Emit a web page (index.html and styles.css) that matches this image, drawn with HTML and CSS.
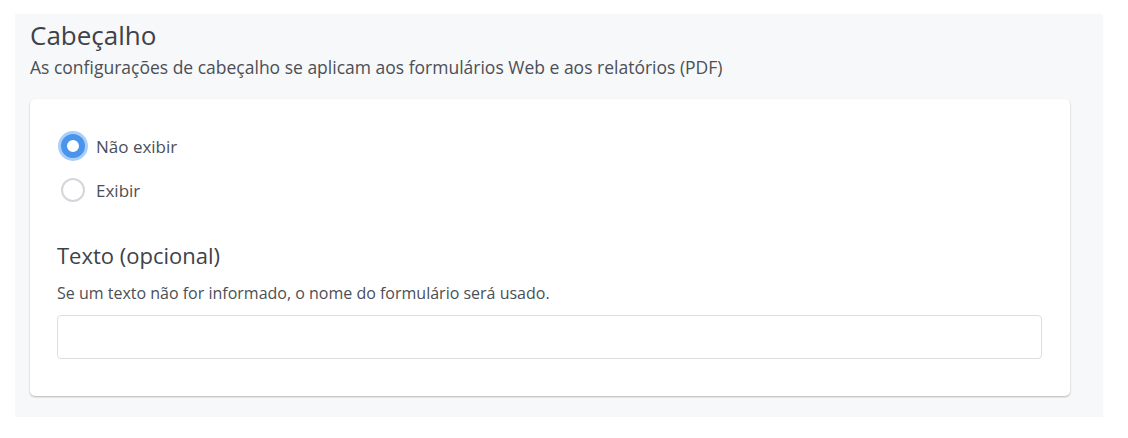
FILE: index.html
```html
<!DOCTYPE html>
<html lang="pt-BR">
<head>
<meta charset="utf-8">
<title>Cabeçalho</title>
<link rel="stylesheet" href="styles.css">
</head>
<body>
<section class="panel">
  <h1 class="title">Cabeçalho</h1>
  <p class="subtitle">As configurações de cabeçalho se aplicam aos formulários Web e aos relatórios (PDF)</p>
  <div class="card">
    <div class="radios">
      <label class="radio">
        <span class="dot dot-on"></span>
        <span class="radio-text">Não exibir</span>
      </label>
      <label class="radio">
        <span class="dot"></span>
        <span class="radio-text">Exibir</span>
      </label>
    </div>
    <h2 class="field-title">Texto (opcional)</h2>
    <p class="field-help">Se um texto não for informado, o nome do formulário será usado.</p>
    <div class="input"></div>
  </div>
</section>
</body>
</html>
```
FILE: styles.css
```css
* { box-sizing: border-box; }
body {
  margin: 0;
  background: #ffffff;
  font-family: "Open Sans", "Noto Sans", sans-serif;
  color: #4b4f56;
}
.panel {
  margin: 14px 0 0 15px;
  width: 1088px;
  height: 403px;
  background: #f7f8f9;
  padding: 4px 33px 0 15px;
}
.title {
  margin: 0;
  font-size: 26px;
  font-weight: 400;
  line-height: 34px;
  color: #3e4248;
}
.subtitle {
  margin: 3px 0 0;
  font-size: 17.5px;
  line-height: 24px;
  color: #4b4f56;
}
.card {
  margin-top: 20px;
  background: #ffffff;
  border-radius: 5px;
  box-shadow: 0 1px 2px rgba(0,0,0,0.28);
  height: 297px;
  padding: 34px 28px 0 27px;
}
.radios {
  display: flex;
  flex-direction: column;
  gap: 18px;
}
.radio {
  display: flex;
  align-items: center;
  gap: 11px;
  height: 26px;
}
.dot {
  flex: none;
  width: 24px;
  height: 24px;
  margin-left: 4px;
  border-radius: 50%;
  border: 2px solid #d3d6da;
  background: #fff;
}
.dot-on {
  border: 6px solid #4a94ec;
  box-shadow: 0 0 0 3px #a9cef8;
}
.radio-text {
  font-size: 17px;
  color: #4b4f56;
}
.field-title {
  margin: 37px 0 0;
  font-size: 22px;
  font-weight: 400;
  line-height: 30px;
  color: #3e4248;
}
.field-help {
  margin: 12px 0 0;
  font-size: 16px;
  line-height: 22px;
}
.input {
  margin-top: 11px;
  height: 44px;
  border: 1px solid #dcdee1;
  border-radius: 4px;
  background: #fff;
}
```
